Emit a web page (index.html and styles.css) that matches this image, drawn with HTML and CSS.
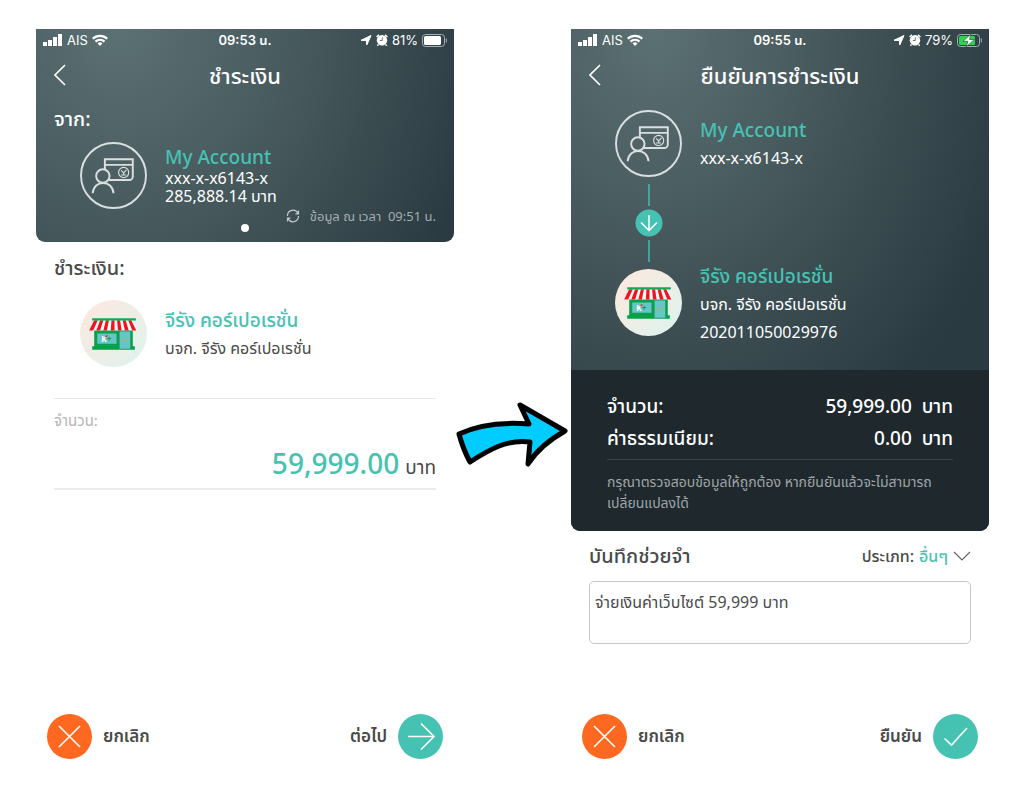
FILE: index.html
```
<!DOCTYPE html>
<html lang="th">
<head>
    <meta charset="UTF-8">
    <meta name="viewport" content="width=device-width, initial-scale=1.0">
    <title>ชำระเงิน</title>
    <link rel="stylesheet" href="styles.css">
</head>
<body>
    <!-- Shared icons -->
    <svg class="sprite" width="0" height="0" aria-hidden="true">
        <linearGradient id="shop-bg" x1="0" y1="0" x2="1" y2="1">
            <stop offset="0.1" stop-color="#fbe9e0"/>
            <stop offset="0.9" stop-color="#e0f2ec"/>
        </linearGradient>
        <symbol id="signal" viewBox="0 0 20 12">
            <path fill="#fff" d="M0 8h4v4H0zM5 6h4v6H5zM10 3h4v9H10zM15 0h4v12H15z"/>
        </symbol>
        <symbol id="wifi" viewBox="0 0 16 12">
            <g fill="none" stroke="#fff" stroke-width="2.200">
                <path d="M0.800 4.800a10.200 10.200 0 0 1 14.400 0"/>
                <path d="M3.500 7.600a6.400 6.400 0 0 1 9 0"/>
            </g>
            <path fill="#fff" d="M5.600 9.500a3.400 3.400 0 0 1 4.800 0L8 12z"/>
        </symbol>
        <symbol id="location" viewBox="0 0 12 12">
            <path fill="#fff" stroke="#fff" stroke-width="1" stroke-linejoin="round" d="M11 1.500L6.800 11 6.400 6.500 1 6.300z"/>
        </symbol>
        <symbol id="alarm" viewBox="0 0 12 12">
            <circle cx="6" cy="6.200" r="5.200" fill="#fff"/>
            <path d="M0.600 3L3 0.700M11.400 3L9 0.700M2.500 10.500l-1.200 1.200M9.500 10.500l1.200 1.200" stroke="#fff" stroke-width="1.500"/>
            <path d="M6.300 3.300v3.200H3.800" fill="none" stroke="#5a6d71" stroke-width="0.900"/>
        </symbol>
        <symbol id="back" viewBox="0 0 12 22">
            <path d="M11 1L1 11l10 10" fill="none" stroke="#fff" stroke-width="1.600"/>
        </symbol>
        <symbol id="account" viewBox="0 0 66 66">
            <g fill="none" stroke="#dcdfe0" stroke-width="1.900">
                <circle cx="33" cy="33" r="32"/>
                <path d="M24.500 26.500V17h27.500V34a3.500 3.500 0 0 1-3.500 3.500H28.500"/>
                <path d="M24.500 22.500h27.500"/>
                <circle cx="22.500" cy="33.500" r="6.600"/>
                <path d="M12.500 50.500c1-13.500 19.500-13.500 20.500 0"/>
                <circle cx="43" cy="30" r="5" stroke-width="1.100"/>
                <path d="M40.500 28l2.500 2.500 2.800-3M43 30.500v1.500M40.500 32.500h5" stroke-width="1.100"/>
            </g>
        </symbol>
        <symbol id="cancel" viewBox="0 0 45 45">
            <circle cx="22.500" cy="22.500" r="22.500" fill="#ff6820"/>
            <path d="M12 12l21 21M33 12L12 33" stroke="#fff" stroke-width="1.600"/>
        </symbol>
        <symbol id="next" viewBox="0 0 45 45">
            <circle cx="22.500" cy="22.500" r="22.500" fill="#46c2b3"/>
            <path d="M10 22.500h25.500M23 9.500l13 13-13 13" fill="none" stroke="#fff" stroke-width="1.600"/>
        </symbol>
        <symbol id="confirm" viewBox="0 0 45 45">
            <circle cx="22.500" cy="22.500" r="22.500" fill="#46c2b3"/>
            <path d="M11.500 24.500l7 6.500L34 14" fill="none" stroke="#fff" stroke-width="1.600"/>
        </symbol>
    </svg>

    <main class="flow">
        <section class="phone">
            <header class="hero">
                <div class="status-bar">
                    <div class="status-left">
                        <svg width="20" height="12"><use href="#signal"/></svg>
                        <span>AIS</span>
                        <svg width="16" height="12"><use href="#wifi"/></svg>
                    </div>
                    <span class="clock">09:53 น.</span>
                    <div class="status-right">
                        <svg width="12" height="12"><use href="#location"/></svg>
                        <svg width="12" height="12"><use href="#alarm"/></svg>
                        <span>81%</span>
                        <svg width="25" height="13" viewBox="0 0 25 13">
                            <rect x="0.500" y="0.500" width="22" height="12" rx="3" fill="none" stroke="#a4afb2"/>
                            <rect x="2" y="2" width="17" height="9" rx="1.500" fill="#fff"/>
                            <path d="M24.300 4.500v4" stroke="#a4afb2"/>
                        </svg>
                    </div>
                </div>
                <div class="title-bar">
                    <button class="back" type="button" aria-label="กลับ"><svg width="12" height="22"><use href="#back"/></svg></button>
                    <h1>ชำระเงิน</h1>
                </div>
                <h2 class="section-label">จาก:</h2>
                <div class="party from">
                    <svg class="avatar" viewBox="0 0 66 66"><use href="#account"/></svg>
                    <div class="party-text compact">
                        <strong>My Account</strong>
                        <span>xxx-x-x6143-x</span>
                        <span>285,888.14 บาท</span>
                    </div>
                </div>
                <div class="updated">
                    <button class="refresh" type="button" aria-label="รีเฟรช">
                        <svg width="14" height="14" viewBox="0 0 14 14" fill="none" stroke="#c3c9cb" stroke-width="1.200">
                            <path d="M1.500 7A5.500 5.500 0 0 1 12 4.500M12.500 7A5.500 5.500 0 0 1 2 9.500M12.500 1.500v3.300H9.500M1.500 12.500V9.200h3"/>
                        </svg>
                    </button>
                    <span>ข้อมูล ณ เวลา&nbsp; 09:51 น.</span>
                </div>
                <span class="page-dot"></span>
            </header>

            <h2 class="section-label dark">ชำระเงิน:</h2>
            <div class="party">
                <svg class="avatar" viewBox="0 0 66 66">
                    <circle cx="33" cy="33" r="33" fill="url(#shop-bg)"/>
                    <path fill="#08a04b" d="M14 29h38v19H14zM12 45.500h42V49H12z"/>
                    <path fill="#68c4c8" d="M17 33h19v10H17zM39 31h10.500v17H39z"/>
                    <path stroke="#9fbd5a" d="M39.500 39.500h9.500"/>
                    <text class="shop-sign" x="21" y="41">K<tspan fill="#08a04b">+</tspan></text>
                    <path stroke="#e62129" stroke-width="1.200" d="M25 36.500l2-1.500"/>
                    <path fill="#fff" d="M14 20h38l5 10H9z"/>
                    <path fill="#f0141e" d="M14 20h3.500l-4.500 10H9zM19.800 20h3.200l-3.200 10H16zM25.500 20h3l-2 10H23zM31 20h3v10h-3.700zM36.500 20h3l1.500 10h-3.600zM42 20h3l3 10h-3.800zM47.500 20h3l5 10h-4z"/>
                    <path fill="#0cab56" d="M12 18h43v2.300H12z"/>
                </svg>
                <div class="party-text">
                    <strong>จีรัง คอร์เปอเรชั่น</strong>
                    <span>บจก. จีรัง คอร์เปอเรชั่น</span>
                </div>
            </div>
            <div class="amount">
                <label for="amount">จำนวน:</label>
                <div class="amount-value">
                    <input id="amount" type="text" inputmode="decimal" value="59,999.00">
                    <span>บาท</span>
                </div>
            </div>

            <footer class="actions">
                <button type="button"><svg width="45" height="45"><use href="#cancel"/></svg>ยกเลิก</button>
                <button type="button">ต่อไป<svg width="45" height="45"><use href="#next"/></svg></button>
            </footer>
        </section>

        <svg class="flow-arrow" viewBox="0 0 117 66" aria-hidden="true">
            <path d="M5 32C26 22 49 20 75 22L66 3L111 29Q86 43 74 62L76 40C54 37 36 47 16 60Q9 47 5 32Z" fill="#00ccff" stroke="#000" stroke-width="5" stroke-linejoin="round"/>
        </svg>

        <section class="phone">
            <header class="hero tall">
                <div class="status-bar">
                    <div class="status-left">
                        <svg width="20" height="12"><use href="#signal"/></svg>
                        <span>AIS</span>
                        <svg width="16" height="12"><use href="#wifi"/></svg>
                    </div>
                    <span class="clock">09:55 น.</span>
                    <div class="status-right">
                        <svg width="12" height="12"><use href="#location"/></svg>
                        <svg width="12" height="12"><use href="#alarm"/></svg>
                        <span>79%</span>
                        <svg width="25" height="13" viewBox="0 0 25 13">
                            <rect x="0.500" y="0.500" width="22" height="12" rx="3" fill="none" stroke="#a4afb2"/>
                            <rect x="2" y="2" width="16" height="9" rx="1.500" fill="#30d158"/>
                            <path d="M24.300 4.500v4" stroke="#a4afb2"/>
                            <path d="M14 0L6 7.300h5L9 13l8.500-7.600h-5z" fill="#fff" stroke="#34464b" stroke-width="0.700"/>
                        </svg>
                    </div>
                </div>
                <div class="title-bar">
                    <button class="back" type="button" aria-label="กลับ"><svg width="12" height="22"><use href="#back"/></svg></button>
                    <h1>ยืนยันการชำระเงิน</h1>
                </div>
                <div class="party sender">
                    <svg class="avatar" viewBox="0 0 66 66"><use href="#account"/></svg>
                    <div class="party-text">
                        <strong>My Account</strong>
                        <span>xxx-x-x6143-x</span>
                    </div>
                </div>
                <svg class="transfer" viewBox="0 0 28 78">
                    <path d="M14 0v22M14 56v22" stroke="#46c2b3" stroke-width="1.400"/>
                    <circle cx="14" cy="39" r="13.500" fill="#46c2b3"/>
                    <path d="M14 31v15M6 38.500l8 8 8-8" fill="none" stroke="#fff" stroke-width="1.500"/>
                </svg>
                <div class="party receiver">
                    <svg class="avatar" viewBox="0 0 66 66">
                        <circle cx="33" cy="33" r="33" fill="url(#shop-bg)"/>
                        <path fill="#08a04b" d="M14 29h38v19H14zM12 45.500h42V49H12z"/>
                        <path fill="#68c4c8" d="M17 33h19v10H17zM39 31h10.500v17H39z"/>
                        <path stroke="#9fbd5a" d="M39.500 39.500h9.500"/>
                        <text class="shop-sign" x="21" y="41">K<tspan fill="#08a04b">+</tspan></text>
                        <path stroke="#e62129" stroke-width="1.200" d="M25 36.500l2-1.500"/>
                        <path fill="#fff" d="M14 20h38l5 10H9z"/>
                        <path fill="#f0141e" d="M14 20h3.500l-4.500 10H9zM19.800 20h3.200l-3.200 10H16zM25.500 20h3l-2 10H23zM31 20h3v10h-3.700zM36.500 20h3l1.500 10h-3.600zM42 20h3l3 10h-3.800zM47.500 20h3l5 10h-4z"/>
                        <path fill="#0cab56" d="M12 18h43v2.300H12z"/>
                    </svg>
                    <div class="party-text">
                        <strong>จีรัง คอร์เปอเรชั่น</strong>
                        <span>บจก. จีรัง คอร์เปอเรชั่น</span>
                        <span>202011050029976</span>
                    </div>
                </div>
                <div class="summary">
                    <dl>
                        <div><dt>จำนวน:</dt><dd>59,999.00&nbsp; บาท</dd></div>
                        <div><dt>ค่าธรรมเนียม:</dt><dd>0.00&nbsp; บาท</dd></div>
                    </dl>
                    <p>กรุณาตรวจสอบข้อมูลให้ถูกต้อง หากยืนยันแล้วจะไม่สามารถ<br>เปลี่ยนแปลงได้</p>
                </div>
            </header>

            <div class="memo">
                <div class="memo-head">
                    <label class="memo-title" for="memo">บันทึกช่วยจำ</label>
                    <div class="memo-type">
                        <label for="type">ประเภท:</label>
                        <select id="type"><option>อื่นๆ</option></select>
                        <svg width="18" height="10" viewBox="0 0 18 10"><path d="M1 1l8 8 8-8" fill="none" stroke="#666" stroke-width="1.200"/></svg>
                    </div>
                </div>
                <textarea id="memo">จ่ายเงินค่าเว็บไซต์ 59,999 บาท</textarea>
            </div>

            <footer class="actions">
                <button type="button"><svg width="45" height="45"><use href="#cancel"/></svg>ยกเลิก</button>
                <button type="button">ยืนยัน<svg width="45" height="45"><use href="#confirm"/></svg></button>
            </footer>
        </section>
    </main>
</body>
</html>
```
FILE: styles.css
```
* {
    box-sizing: border-box;
}

body {
    margin: 0;
    background-color: #fff;
    color: #4a4a4a;
    font-family: "Noto Sans", "Noto Sans Thai", sans-serif;
    font-size: 16px;
}

h1, h2, p, dl, dd {
    margin: 0;
    font-weight: 500;
}

button, input, select, textarea {
    font: inherit;
    color: inherit;
    background: none;
    border: 0;
    padding: 0;
    margin: 0;
}

button {
    cursor: pointer;
}

svg {
    display: block;
    flex: none;
}

.sprite {
    position: absolute;
}

.shop-sign {
    font-size: 8px;
    font-weight: bold;
    fill: #fff;
}

.flow {
    display: grid;
    grid-template-columns: 1fr 117px 1fr;
    min-height: 100vh;
    padding: 29px 35px 52px 36px;
}

.flow-arrow {
    width: 100%;
    margin-top: 373px;
}

.phone {
    display: flex;
    flex-direction: column;
    min-width: 0;
}

.hero {
    background: radial-gradient(ellipse 90% 190% at 20% 0, #5c7174 0%, #435559 55%, #2a3a41 100%);
    border-radius: 0 0 9px 9px;
    color: #fff;
    overflow: hidden;
}

.hero.tall {
    background: radial-gradient(ellipse 90% 95% at 20% 0, #5c7174 0%, #435559 50%, #2a3a41 100%);
}

.status-bar {
    display: grid;
    grid-template-columns: 1fr auto 1fr;
    align-items: center;
    height: 22px;
    padding: 0 7px;
    font-family: Inter, "Noto Sans Thai", sans-serif;
    font-size: 13px;
    line-height: 22px;
}

.status-left, .status-right {
    display: flex;
    align-items: center;
    gap: 4px;
}

.status-right {
    justify-content: flex-end;
}

.clock {
    font-weight: 600;
}

.title-bar {
    display: grid;
    grid-template-columns: 36px 1fr 36px;
    align-items: center;
    height: 47px;
}

.back {
    padding-left: 18px;
}

h1 {
    text-align: center;
    font-size: 22px;
    line-height: 44px;
}

.section-label {
    padding-left: 18px;
    font-size: 20px;
    line-height: 42px;
}

.section-label.dark {
    padding-top: 5px;
}

.party {
    display: flex;
    gap: 18px;
    padding: 11px 18px 0 44px;
}

.party.from {
    padding-top: 2px;
}

.avatar {
    width: 67px;
    height: 67px;
}

.party-text {
    display: flex;
    flex-direction: column;
    padding-top: 6px;
    font-size: 16px;
    line-height: 28px;
}

.party-text strong {
    color: #46c2b3;
    font-size: 19px;
    font-weight: 500;
}

.party-text.compact {
    padding-top: 3px;
    line-height: 18px;
}

.party-text.compact strong {
    line-height: 24px;
}

.updated {
    display: flex;
    justify-content: flex-end;
    align-items: center;
    gap: 10px;
    padding-right: 18px;
    color: #a4adb0;
    font-size: 13px;
    line-height: 14px;
}

.page-dot {
    display: block;
    width: 8px;
    height: 8px;
    margin: 1px auto 10px;
    border-radius: 50%;
    background-color: #fff;
}

.amount {
    margin: 31px 18px 0;
    padding: 9px 0 3px;
    border-top: 1px solid #e8e8e8;
    border-bottom: 2px solid #ececec;
}

.amount label {
    display: block;
    color: #b4b4b4;
    font-size: 15px;
    line-height: 24px;
}

.amount-value {
    display: flex;
    align-items: baseline;
    gap: 6px;
    margin-top: 13px;
    font-size: 19px;
    line-height: 36px;
}

.amount-value input {
    flex: 1;
    min-width: 0;
    height: 36px;
    color: #46c2b3;
    font-size: 28px;
    font-weight: 500;
    text-align: right;
}

.sender {
    padding-top: 12px;
}

.transfer {
    width: 28px;
    height: 78px;
    margin: 7px 0 7px 64px;
}

.receiver {
    padding-top: 0;
}

.receiver .party-text {
    padding-top: 0;
    margin-top: -7px;
}

.summary {
    margin-top: 24px;
    padding: 20px 36px 18px;
    background-color: #1f292d;
}

.summary dl {
    padding-bottom: 5px;
    border-bottom: 1px solid #3a4444;
    font-size: 19px;
    line-height: 32px;
}

.summary dl div {
    display: flex;
    justify-content: space-between;
}

.summary p {
    padding-top: 11px;
    color: #a0a5a7;
    font-size: 14px;
    font-weight: 400;
    line-height: 21px;
}

.memo {
    padding: 8px 18px 0;
}

.memo-head {
    display: flex;
    justify-content: space-between;
    align-items: center;
    line-height: 34px;
}

.memo-title {
    font-size: 20px;
    font-weight: 500;
}

.memo-type {
    display: flex;
    align-items: center;
    gap: 5px;
    font-size: 16px;
    font-weight: 500;
}

.memo-type select {
    appearance: none;
    height: 34px;
    color: #46c2b3;
}

.memo textarea {
    display: block;
    width: 100%;
    height: 63px;
    margin-top: 8px;
    padding: 8px 5px;
    border: 1px solid #c8c8c8;
    border-radius: 5px;
    font-size: 16px;
    line-height: 24px;
    resize: none;
}

.actions {
    display: flex;
    justify-content: space-between;
    margin-top: auto;
    padding: 0 11px;
}

.actions button {
    display: flex;
    align-items: center;
    gap: 11px;
    font-size: 17px;
    font-weight: 600;
}
```
